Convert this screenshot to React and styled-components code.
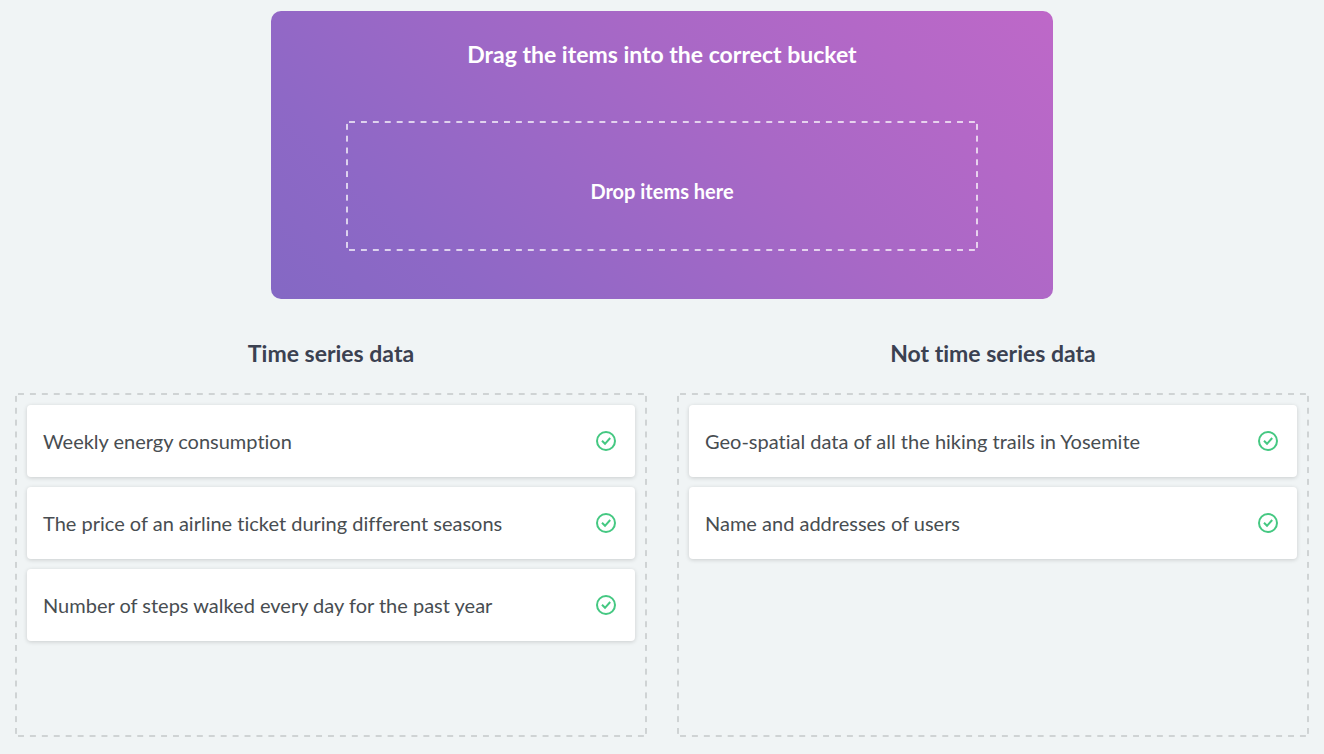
import React from 'react';
import styled, { createGlobalStyle, css } from 'styled-components';

const Global = createGlobalStyle`
  *, *::before, *::after { box-sizing: border-box; }
  body {
    margin: 0;
    background: #f0f4f5;
    color: #484d51;
    font-family: Lato, "Liberation Sans", sans-serif;
    font-variant-ligatures: none;
  }
`;

/* Evenly spaced dashes along all four sides, rounded to whole repeats. */
const dashed = (color) => css`
  --across: linear-gradient(90deg, transparent 25%, ${color} 25% 75%, transparent 75%);
  --down: linear-gradient(transparent 25%, ${color} 25% 75%, transparent 75%);
  background:
    var(--across) top / 12px 2px round no-repeat,
    var(--across) bottom / 12px 2px round no-repeat,
    var(--down) left / 2px 12px no-repeat round,
    var(--down) right / 2px 12px no-repeat round;
  border-radius: 4px;
`;

const Page = styled.main`
  display: flex;
  flex-direction: column;
  min-height: 100vh;
  padding: 11px 15px 17px;
`;

const Hero = styled.section`
  align-self: center;
  display: flex;
  flex-direction: column;
  align-items: center;
  gap: 51px;
  width: 100%;
  max-width: 782px;
  padding: 27px 75px 48px;
  border-radius: 10px;
  background: linear-gradient(45deg, #8468c4, #8e68c6 20%, #a868c6 60%, #be68c8);
  color: #fff;
`;

const HeroTitle = styled.h1`
  margin: 0;
  font-size: 23px;
  line-height: 32px;
  font-weight: 700;
  text-align: center;
`;

const DropZone = styled.div`
  display: flex;
  align-items: center;
  justify-content: center;
  width: 100%;
  min-height: 130px;
  padding: 22px 12px 12px;
  ${dashed('rgba(255, 255, 255, 0.7)')}
  font-size: 20px;
  line-height: 28px;
  font-weight: 700;
`;

const Buckets = styled.div`
  display: grid;
  grid-template-columns: 1fr 1fr;
  gap: 30px;
  flex: 1;
  padding-top: 38px;
`;

const Bucket = styled.section`
  display: flex;
  flex-direction: column;
  gap: 24px;
`;

const BucketTitle = styled.h2`
  margin: 0;
  color: #3b4151;
  font-size: 23px;
  line-height: 32px;
  font-weight: 700;
  text-align: center;
`;

const List = styled.ul`
  display: flex;
  flex-direction: column;
  gap: 10px;
  flex: 1;
  margin: 0;
  padding: 12px;
  list-style: none;
  ${dashed('#cfd3d4')}
`;

const Item = styled.li`
  display: flex;
  align-items: center;
  justify-content: space-between;
  gap: 16px;
  min-height: 72px;
  padding: 16px;
  border-radius: 4px;
  background: #fff;
  box-shadow: 0 1px 4px rgba(0, 0, 0, 0.16);
  font-size: 20px;
  line-height: 28px;
`;

const Icon = styled.svg`
  flex: none;
  width: 26px;
  height: 26px;
  fill: none;
  stroke: #45c882;
  stroke-width: 2;
`;

const Check = () => (
  <Icon viewBox="0 0 26 26" role="img" aria-label="Correct">
    <circle cx="13" cy="13" r="9" />
    <path d="M9 12.8l3 3 5.2-5.8" />
  </Icon>
);

const buckets = [
  {
    title: 'Time series data',
    items: [
      'Weekly energy consumption',
      'The price of an airline ticket during different seasons',
      'Number of steps walked every day for the past year',
    ],
  },
  {
    title: 'Not time series data',
    items: ['Geo-spatial data of all the hiking trails in Yosemite', 'Name and addresses of users'],
  },
];

export default function App() {
  return (
    <>
      <Global />
      <Page>
        <Hero>
          <HeroTitle>Drag the items into the correct bucket</HeroTitle>
          <DropZone>Drop items here</DropZone>
        </Hero>
        <Buckets>
          {buckets.map((bucket) => (
            <Bucket key={bucket.title}>
              <BucketTitle>{bucket.title}</BucketTitle>
              <List>
                {bucket.items.map((item) => (
                  <Item key={item}>{item}<Check /></Item>
                ))}
              </List>
            </Bucket>
          ))}
        </Buckets>
      </Page>
    </>
  );
}
